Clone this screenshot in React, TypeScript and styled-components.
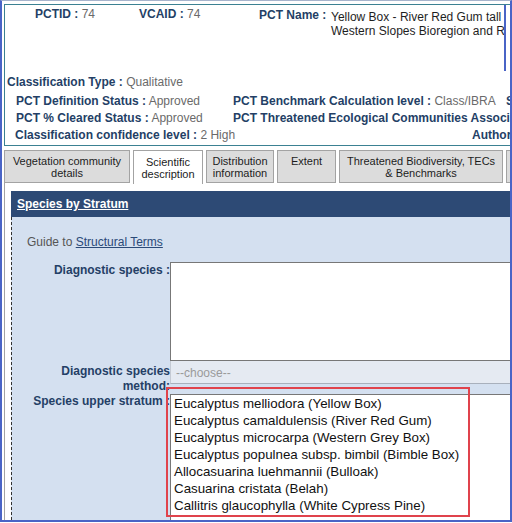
import React from 'react';
import styled, { createGlobalStyle } from 'styled-components';

const GlobalStyle = createGlobalStyle`
  html, body { margin: 0; padding: 0; background: #fff; }
  body { font-family: "Liberation Sans", Arial, sans-serif; }
`;

const Frame = styled.div`
  position: relative;
  width: 512px;
  height: 522px;
  box-sizing: border-box;
  overflow: hidden;
  border-left: 2px solid #4a64c6;
  border-right: 2px solid #4a64c6;
  border-bottom: 2px solid #4a64c6;
  border-top: 1px solid #a7b4cc;
  background: #fff;
`;

const Header = styled.div`
  margin: 3px 0 0 2px;
  border-top: 1px solid #3b8192;
  border-left: 1px solid #3b8192;
  border-bottom: 1px solid #3b8192;
  height: 142px;
  box-sizing: border-box;
  overflow: hidden;
`;

const IdArea = styled.div`
  display: flex;
  height: 66px;
  width: 501px;
  box-sizing: border-box;
  border-right: 2px solid #4a64c6;
  padding: 2px 0 0 30px;
  overflow: hidden;
  white-space: nowrap;
`;

const Cell = styled.div<{ $w?: number }>`
  flex: 0 0 ${({ $w }) => ($w ? `${$w}px` : 'auto')};
  display: flex;
  font-size: 12px;
  line-height: 14px;
`;

const Label = styled.span`
  font-weight: bold;
  color: #243f66;
  font-size: 12px;
`;

const Value = styled.span`
  color: #6a6a6a;
  font-size: 12px;
`;

const NameLabel = styled(Label)`
  flex: 0 0 72px;
  padding-top: 1px;
`;

const NameValue = styled.div`
  color: #1e1e1e;
  font-size: 12px;
  line-height: 14px;
  padding-top: 3px;
`;

const InfoBlock = styled.div`
  padding: 3px 0 0 2px;
  white-space: nowrap;
`;

const InfoRow = styled.div<{ $indent?: number; $h?: number }>`
  display: flex;
  height: ${({ $h }) => $h ?? 17}px;
  line-height: 17px;
  padding-left: ${({ $indent }) => $indent ?? 0}px;
`;

const InfoItem = styled.div<{ $w?: number }>`
  flex: 0 0 ${({ $w }) => ($w ? `${$w}px` : 'auto')};
  font-size: 12px;
`;

const Tabs = styled.div`
  display: flex;
  gap: 3px;
  margin: 4px 0 0 2px;
  height: 33px;
  align-items: flex-start;
  white-space: nowrap;
`;

const Tab = styled.div<{ $w: number; $active?: boolean }>`
  flex: 0 0 ${({ $w }) => $w}px;
  box-sizing: border-box;
  display: flex;
  align-items: center;
  justify-content: center;
  text-align: center;
  font-size: 11px;
  line-height: 12px;
  color: #1c1c1c;
  background: ${({ $active }) => ($active ? '#fff' : '#dcdcdc')};
  border: 1px solid #a3a3a3;
  border-bottom: ${({ $active }) => ($active ? 'none' : '1px solid #a3a3a3')};
  height: ${({ $active }) => ($active ? '34px' : '33px')};
`;

const Panel = styled.div`
  margin-left: 2px;
  border-left: 1px solid #a3a3a3;
  padding: 8px 0 0 6px;
  height: 360px;
`;

const SectionBar = styled.div`
  height: 26px;
  background: #2d4a75;
  display: flex;
  align-items: center;
  padding-left: 6px;
`;

const SectionTitle = styled.a`
  color: #fff;
  font-weight: bold;
  font-size: 12px;
  text-decoration: underline;
`;

const FormArea = styled.div`
  background: #d4e0f0;
  border-left: 1px dashed #333;
  padding: 18px 0 0 0;
  height: 320px;
`;

const Guide = styled.div`
  font-size: 12px;
  color: #555;
  padding-left: 15px;
  line-height: 14px;
`;

const Link = styled.a`
  color: #2b4a78;
  text-decoration: underline;
`;

const FormGrid = styled.div`
  display: grid;
  grid-template-columns: 158px 1fr;
  margin-top: 13px;
`;

const FieldLabel = styled.div<{ $pt?: number }>`
  font-weight: bold;
  font-size: 12px;
  line-height: 15px;
  color: #243f66;
  text-align: right;
  padding: ${({ $pt }) => $pt ?? 0}px 0 0 0;
`;

const TextArea = styled.div`
  height: 99px;
  background: #fff;
  border: 1px solid #777;
  border-right: none;
  box-sizing: border-box;
`;

const Select = styled.div`
  height: 23px;
  box-sizing: border-box;
  background: #e5eaf2;
  border-bottom: 1px solid #a8b0bc;
  border-left: 1px solid #c4cad4;
  font-size: 12px;
  color: #9a9a9a;
  padding: 5px 0 0 5px;
`;

const ListBox = styled.div`
  height: 130px;
  background: #fff;
  border: 1px solid #777;
  border-right: none;
  box-sizing: border-box;
  padding: 0 0 0 3px;
`;

const Option = styled.div`
  font-size: 13.33px;
  line-height: 17px;
  color: #111;
  white-space: nowrap;
`;

const Highlight = styled.div`
  position: absolute;
  left: 164px;
  top: 386px;
  width: 304px;
  height: 130px;
  box-sizing: border-box;
  border: 2px solid #e0434c;
  pointer-events: none;
`;

const species = [
  'Eucalyptus melliodora (Yellow Box)',
  'Eucalyptus camaldulensis (River Red Gum)',
  'Eucalyptus microcarpa (Western Grey Box)',
  'Eucalyptus populnea subsp. bimbil (Bimble Box)',
  'Allocasuarina luehmannii (Bulloak)',
  'Casuarina cristata (Belah)',
  'Callitris glaucophylla (White Cypress Pine)',
];

export default function App() {
  return (
    <>
      <GlobalStyle />
      <Frame>
        <Header>
          <IdArea>
            <Cell $w={104}>
              <Label>PCTID :&nbsp;</Label>
              <Value>74</Value>
            </Cell>
            <Cell $w={120}>
              <Label>VCAID :&nbsp;</Label>
              <Value>74</Value>
            </Cell>
            <Cell>
              <NameLabel>PCT Name :</NameLabel>
              <NameValue>
                Yellow Box - River Red Gum tall grassy riverine woodland of NSW South
                <br />
                Western Slopes Bioregion and Riverina Bioregion
              </NameValue>
            </Cell>
          </IdArea>
          <InfoBlock>
            <InfoRow $h={19}>
              <InfoItem>
                <Label>Classification Type :</Label> <Value>Qualitative</Value>
              </InfoItem>
            </InfoRow>
            <InfoRow $indent={9}>
              <InfoItem $w={217}>
                <Label>PCT Definition Status :</Label> <Value>Approved</Value>
              </InfoItem>
              <InfoItem $w={273}>
                <Label>PCT Benchmark Calculation level :</Label> <Value>Class/IBRA</Value>
              </InfoItem>
              <InfoItem>
                <Label>Status :</Label>
              </InfoItem>
            </InfoRow>
            <InfoRow $indent={9}>
              <InfoItem $w={217}>
                <Label>PCT % Cleared Status :</Label> <Value>Approved</Value>
              </InfoItem>
              <InfoItem>
                <Label>PCT Threatened Ecological Communities Association :</Label>
              </InfoItem>
            </InfoRow>
            <InfoRow $indent={8}>
              <InfoItem $w={457}>
                <Label>Classification confidence level :</Label> <Value>2 High</Value>
              </InfoItem>
              <InfoItem>
                <Label>Authority :</Label>
              </InfoItem>
            </InfoRow>
          </InfoBlock>
        </Header>

        <Tabs>
          <Tab $w={126}>Vegetation community<br />details</Tab>
          <Tab $w={70} $active>Scientific<br />description</Tab>
          <Tab $w={68}>Distribution<br />information</Tab>
          <Tab $w={59}>Extent<br />&nbsp;</Tab>
          <Tab $w={164}>Threatened Biodiversity, TECs<br />&amp; Benchmarks</Tab>
          <Tab $w={60}>Plant<br />species</Tab>
        </Tabs>

        <Panel>
          <SectionBar>
            <SectionTitle>Species by Stratum</SectionTitle>
          </SectionBar>
          <FormArea>
            <Guide>
              Guide to <Link>Structural Terms</Link>
            </Guide>
            <FormGrid>
              <FieldLabel $pt={1}>Diagnostic species :</FieldLabel>
              <TextArea />
              <FieldLabel $pt={3}>Diagnostic species method:</FieldLabel>
              <Select>--choose--</Select>
              <FieldLabel $pt={0}>Species upper stratum :</FieldLabel>
              <ListBox>
                {species.map((s) => (
                  <Option key={s}>{s}</Option>
                ))}
              </ListBox>
            </FormGrid>
          </FormArea>
        </Panel>
        <Highlight />
      </Frame>
    </>
  );
}
